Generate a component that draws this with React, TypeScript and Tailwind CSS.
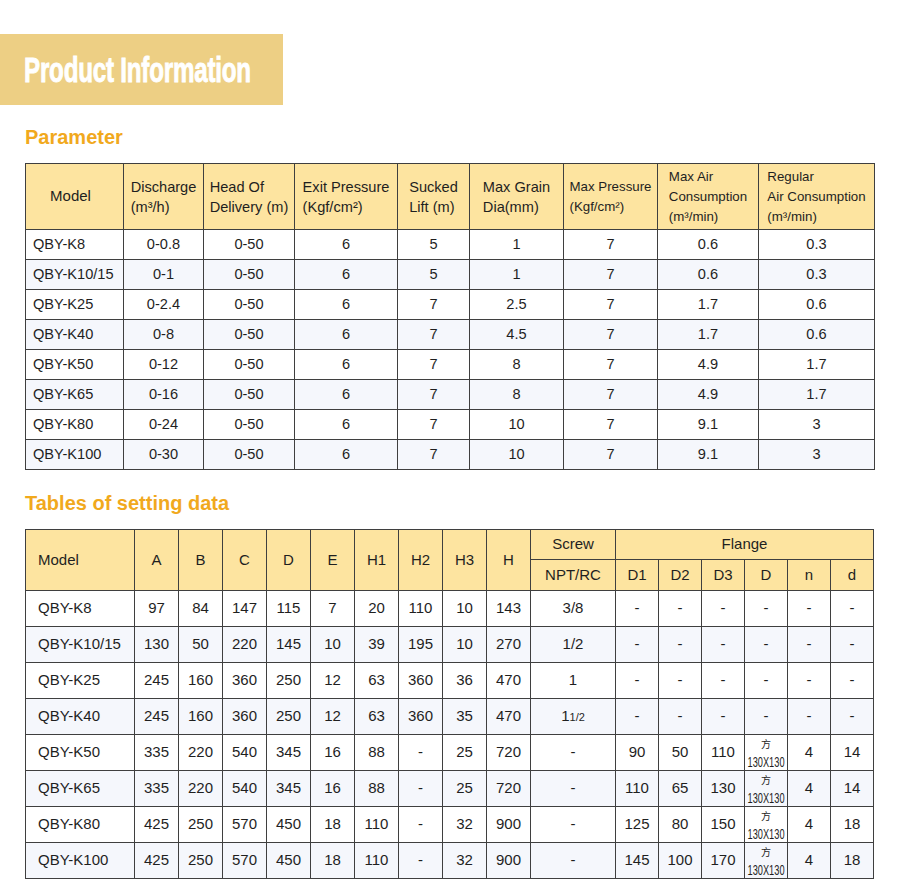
import React from 'react';

const params = [
  ['QBY-K8', '0-0.8', '0-50', '6', '5', '1', '7', '0.6', '0.3'],
  ['QBY-K10/15', '0-1', '0-50', '6', '5', '1', '7', '0.6', '0.3'],
  ['QBY-K25', '0-2.4', '0-50', '6', '7', '2.5', '7', '1.7', '0.6'],
  ['QBY-K40', '0-8', '0-50', '6', '7', '4.5', '7', '1.7', '0.6'],
  ['QBY-K50', '0-12', '0-50', '6', '7', '8', '7', '4.9', '1.7'],
  ['QBY-K65', '0-16', '0-50', '6', '7', '8', '7', '4.9', '1.7'],
  ['QBY-K80', '0-24', '0-50', '6', '7', '10', '7', '9.1', '3'],
  ['QBY-K100', '0-30', '0-50', '6', '7', '10', '7', '9.1', '3'],
];

const setting = [
  ['QBY-K8', '97', '84', '147', '115', '7', '20', '110', '10', '143', '3/8', '-', '-', '-', '-', '-', '-'],
  ['QBY-K10/15', '130', '50', '220', '145', '10', '39', '195', '10', '270', '1/2', '-', '-', '-', '-', '-', '-'],
  ['QBY-K25', '245', '160', '360', '250', '12', '63', '360', '36', '470', '1', '-', '-', '-', '-', '-', '-'],
  ['QBY-K40', '245', '160', '360', '250', '12', '63', '360', '35', '470', '11/2', '-', '-', '-', '-', '-', '-'],
  ['QBY-K50', '335', '220', '540', '345', '16', '88', '-', '25', '720', '-', '90', '50', '110', 'sq', '4', '14'],
  ['QBY-K65', '335', '220', '540', '345', '16', '88', '-', '25', '720', '-', '110', '65', '130', 'sq', '4', '14'],
  ['QBY-K80', '425', '250', '570', '450', '18', '110', '-', '32', '900', '-', '125', '80', '150', 'sq', '4', '18'],
  ['QBY-K100', '425', '250', '570', '450', '18', '110', '-', '32', '900', '-', '145', '100', '170', 'sq', '4', '18'],
];

const cell = 'border border-[#3f3f3f] p-0';

function HeadText({ lines, small }: { lines: string[]; small?: boolean }) {
  return (
    <div className="flex justify-center">
      <div className={`text-left leading-5 ${small ? 'text-[13.3px]' : 'text-[14.6px]'}`}>
        {lines.map((l, i) => (
          <div key={i} className="whitespace-nowrap">{l}</div>
        ))}
      </div>
    </div>
  );
}

// "方 130X130" square flange note, squeezed into a 43px column
function SquareFlange() {
  return (
    <div className="-mt-[2px] flex flex-col items-center">
      <span className="block h-[15px] font-['Noto_Sans_CJK_SC',sans-serif] text-[10px] leading-[15px]">方</span>
      <span className="block h-[16px] w-[38px] shrink-0 overflow-visible">
        <span className="-ml-[9px] inline-block whitespace-nowrap text-[14px] leading-[16px] scale-x-[0.66]">130X130</span>
      </span>
    </div>
  );
}

function Screw({ v }: { v: string }) {
  if (v === '11/2') {
    return (
      <span>
        1<span className="text-[11px]">1/2</span>
      </span>
    );
  }
  return <span>{v}</span>;
}

export default function App() {
  const widths1 = [98, 80, 91, 103, 72, 94, 94, 101, 116];
  const widths2 = [109, 44, 44, 44, 44, 44, 44, 44, 44, 44, 85, 43, 43, 43, 43, 43, 43];

  return (
    <div className="w-[900px] bg-white pt-[34px] pb-4 font-['Liberation_Sans',Arial,sans-serif] text-[#1f1f1f]">
      {/* Banner */}
      <div className="flex h-[71px] w-[283px] items-center bg-[#edcf84] pl-6">
        <span className="inline-block origin-left scale-x-[0.69] whitespace-nowrap text-[35px] font-bold leading-none tracking-[-0.3px] text-white [-webkit-text-stroke:0.9px_white]">
          Product Information
        </span>
      </div>

      <div className="px-[25px]">
        <h2 className="mt-[22px] h-5 text-[20px] font-bold leading-5 text-[#f1a91d]">Parameter</h2>

        <table className="mt-[16px] w-[849px] table-fixed border-collapse">
          <colgroup>
            {widths1.map((w, i) => (
              <col key={i} style={{ width: w }} />
            ))}
          </colgroup>
          <thead>
            <tr className="h-[66px] bg-[#fde4a0]">
              <th className={`${cell} pr-2 text-[15px] font-normal`}>Model</th>
              <th className={`${cell} font-normal`}><HeadText lines={['Discharge', '(m³/h)']} /></th>
              <th className={`${cell} font-normal`}><HeadText lines={['Head Of', 'Delivery (m)']} /></th>
              <th className={`${cell} font-normal`}><HeadText lines={['Exit Pressure', '(Kgf/cm²)']} /></th>
              <th className={`${cell} font-normal`}><HeadText lines={['Sucked', 'Lift (m)']} /></th>
              <th className={`${cell} font-normal`}><HeadText lines={['Max Grain', 'Dia(mm)']} /></th>
              <th className={`${cell} font-normal`}><HeadText small lines={['Max Pressure', '(Kgf/cm²)']} /></th>
              <th className={`${cell} font-normal`}><HeadText small lines={['Max Air', 'Consumption', '(m³/min)']} /></th>
              <th className={`${cell} font-normal`}><HeadText small lines={['Regular', 'Air Consumption', '(m³/min)']} /></th>
            </tr>
          </thead>
          <tbody>
            {params.map((row, r) => (
              <tr key={r} className={`h-[30px] text-[14.6px] ${r % 2 === 1 ? 'bg-[#f5f7fc]' : 'bg-white'}`}>
                {row.map((v, c) => (
                  <td key={c} className={`${cell} ${c === 0 ? 'pl-[7px] text-left' : 'text-center'}`}>
                    {v}
                  </td>
                ))}
              </tr>
            ))}
          </tbody>
        </table>

        <h2 className="mt-[23px] h-5 text-[20px] font-bold leading-5 text-[#f1a91d]">Tables of setting data</h2>

        <table className="mt-[16px] w-[848px] table-fixed border-collapse text-[15px]">
          <colgroup>
            {widths2.map((w, i) => (
              <col key={i} style={{ width: w }} />
            ))}
          </colgroup>
          <thead className="bg-[#fde4a0]">
            <tr className="h-[30px]">
              <th rowSpan={2} className={`${cell} pl-3 text-left font-normal`}>Model</th>
              {['A', 'B', 'C', 'D', 'E', 'H1', 'H2', 'H3', 'H'].map((h) => (
                <th key={h} rowSpan={2} className={`${cell} text-center font-normal`}>{h}</th>
              ))}
              <th className={`${cell} text-center font-normal`}>Screw</th>
              <th colSpan={6} className={`${cell} text-center font-normal`}>Flange</th>
            </tr>
            <tr className="h-[31px]">
              <th className={`${cell} text-center font-normal`}>NPT/RC</th>
              {['D1', 'D2', 'D3', 'D', 'n', 'd'].map((h) => (
                <th key={h} className={`${cell} text-center font-normal`}>{h}</th>
              ))}
            </tr>
          </thead>
          <tbody>
            {setting.map((row, r) => (
              <tr key={r} className={`h-[36px] ${r % 2 === 1 ? 'bg-[#f5f7fc]' : 'bg-white'}`}>
                {row.map((v, c) => (
                  <td key={c} className={`${cell} ${c === 0 ? 'pl-3 text-left' : 'text-center'}`}>
                    {v === 'sq' ? <SquareFlange /> : c === 10 ? <Screw v={v} /> : v}
                  </td>
                ))}
              </tr>
            ))}
          </tbody>
        </table>
      </div>
    </div>
  );
}
